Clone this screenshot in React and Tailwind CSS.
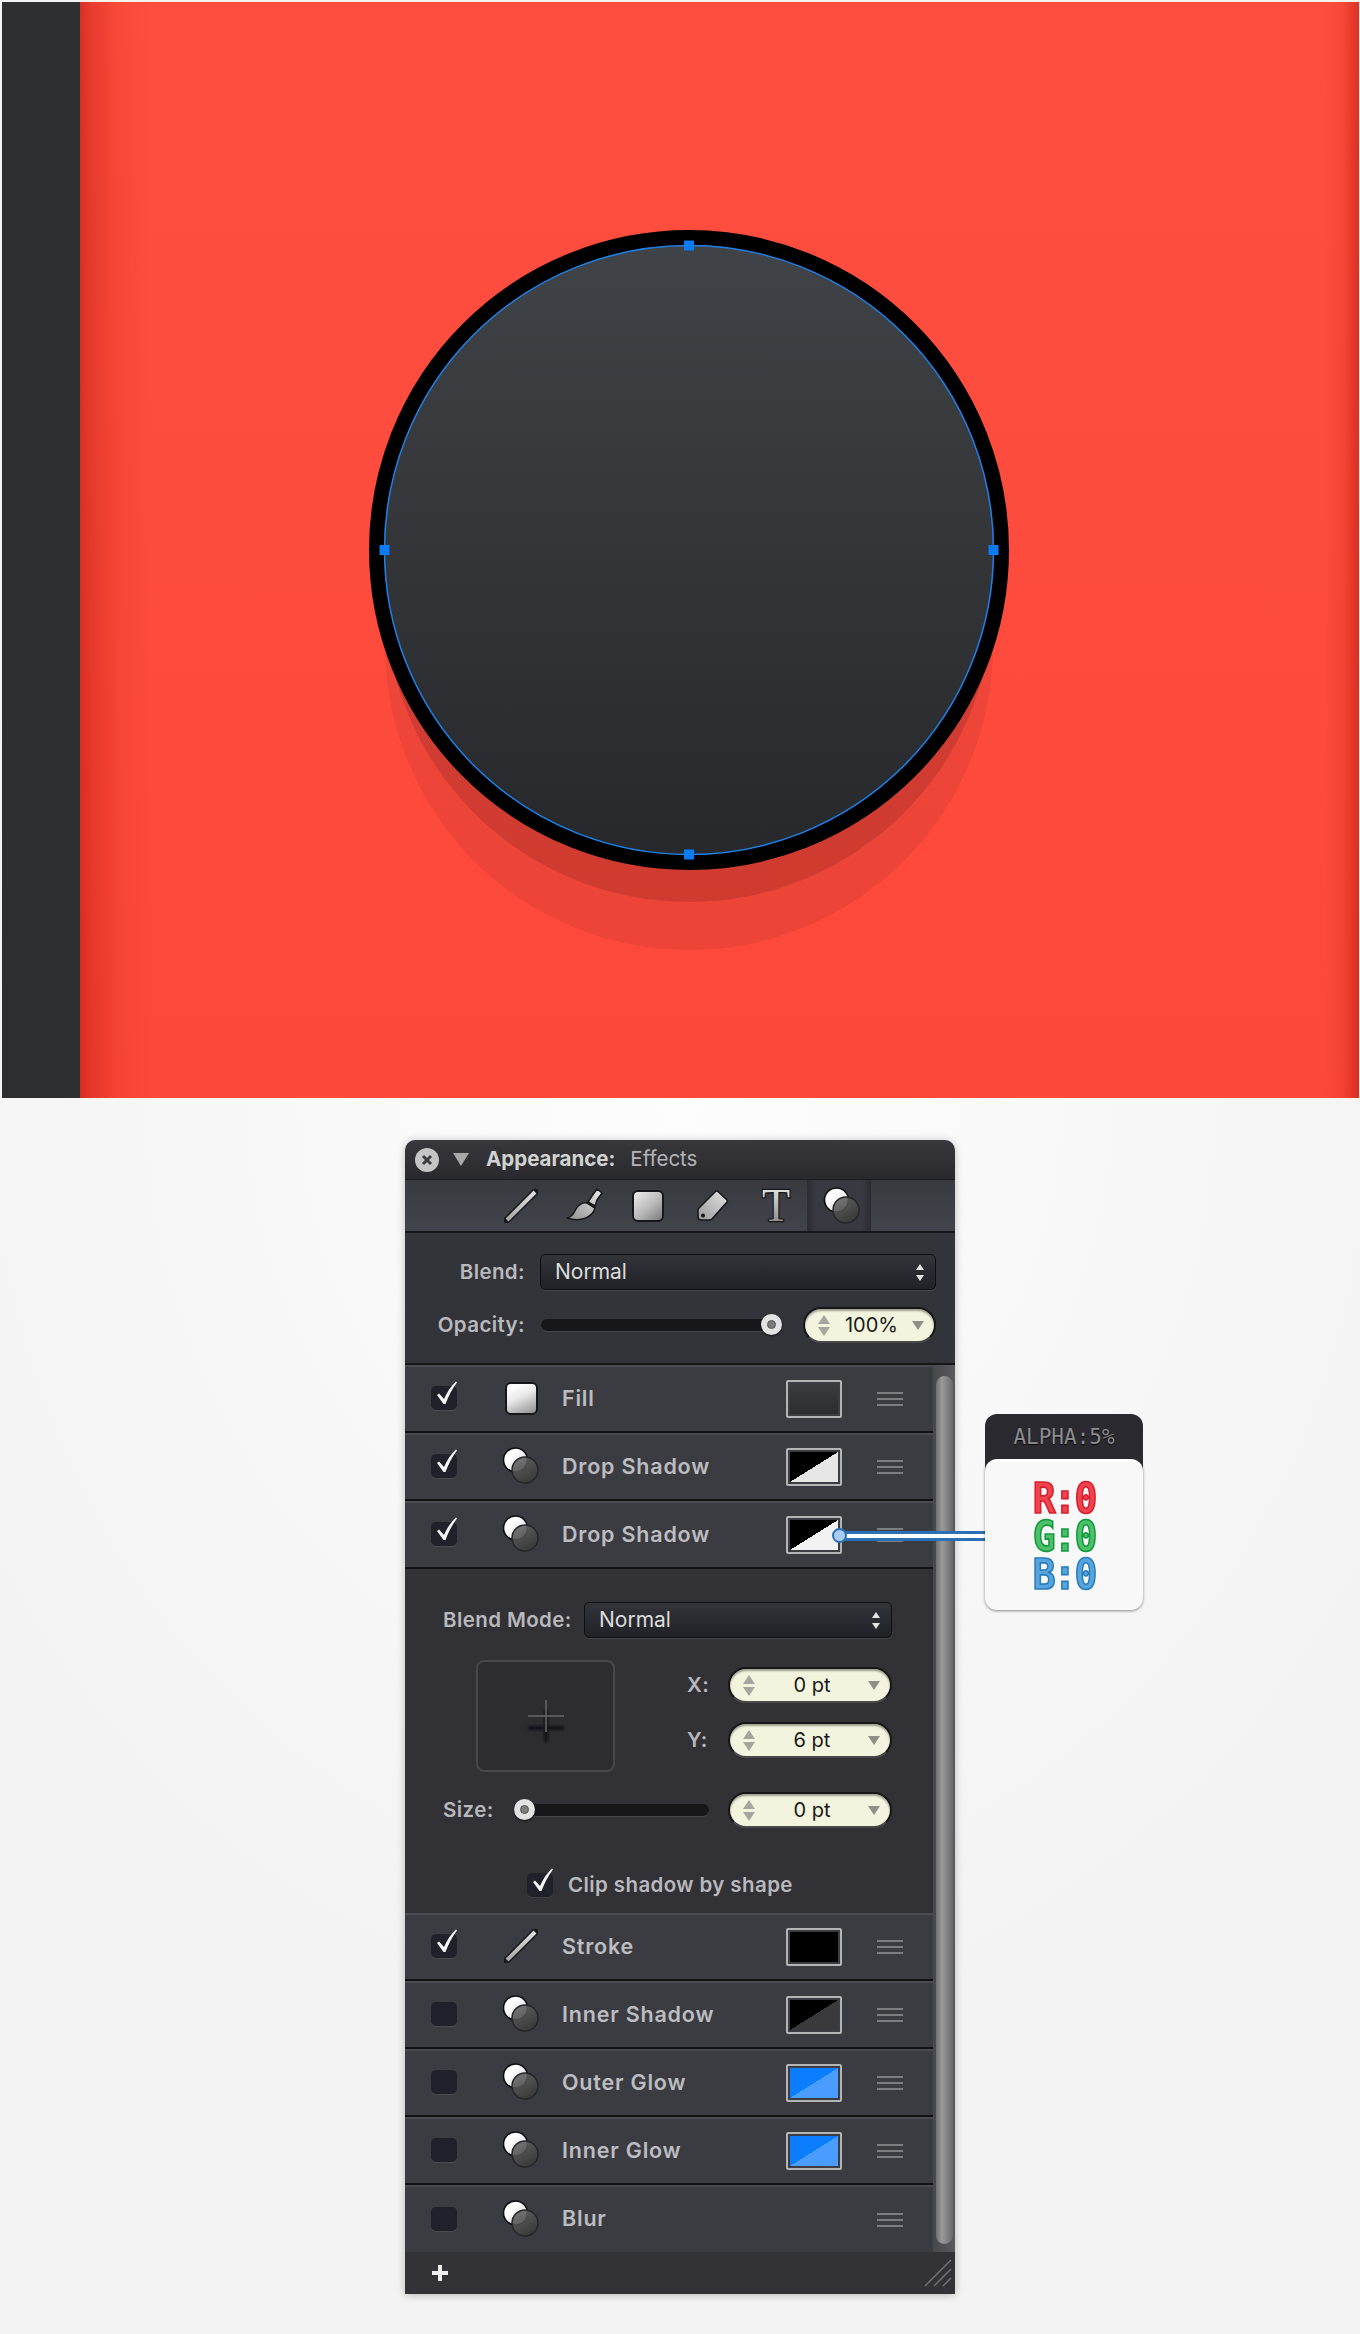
import React from "react";

const sans = "font-['Inter','Liberation_Sans',sans-serif]";
const formLabel = `text-[20.5px] font-semibold tracking-[0.4px] text-[#b9b9bd] ${sans}`;

function CheckMark() {
  return (
    <svg className="absolute left-[5px] top-[-5px]" width="22" height="24" viewBox="0 0 22 24">
      <path d="M1 14 L3 12.5 L8 18 C11 11 15 5 20 0.5 L21 1.5 C16 8 12.5 15 9.5 23 L7.5 23 Z" fill="#f4f4f4" />
    </svg>
  );
}

function Checkbox({ on }) {
  return (
    <div className="relative w-[26px] h-[24px] shrink-0 rounded-[5px] bg-[#20212a] shadow-[0_1px_0_rgba(255,255,255,0.08)]">
      {on && <CheckMark />}
    </div>
  );
}

function LineIcon({ size = 34 }) {
  return (
    <svg width={size} height={size} viewBox="0 0 34 34">
      <defs>
        <linearGradient id="lineGrad" x1="0" y1="1" x2="1" y2="0">
          <stop offset="0" stopColor="#a8a8a8" />
          <stop offset="1" stopColor="#e0e0e0" />
        </linearGradient>
      </defs>
      <path d="M3 31 L31 3" stroke="#17171a" strokeWidth="7" strokeLinecap="round" />
      <path d="M3 31 L31 3" stroke="url(#lineGrad)" strokeWidth="4" />
    </svg>
  );
}

function BrushIcon() {
  return (
    <svg width="37" height="35" viewBox="0 0 37 35">
      <defs>
        <linearGradient id="brushGrad" x1="0" y1="1" x2="1" y2="0">
          <stop offset="0" stopColor="#8e8e8e" />
          <stop offset="1" stopColor="#ececec" />
        </linearGradient>
      </defs>
      <path
        d="M31 1 L36 5 L31 12 L29 18 L22 14 L26 8 Z M21 15 L29 20 C27 28 16 35 1 30 C6 29 8 25 10 21 C12 17 17 14 21 15 Z"
        fill="url(#brushGrad)"
        stroke="#17171a"
        strokeWidth="1.5"
        strokeLinejoin="round"
      />
    </svg>
  );
}

function FillIcon({ light }) {
  return (
    <div
      className={
        light
          ? "w-[33px] h-[33px] rounded-[6px] border-2 border-[#17171a] bg-[linear-gradient(155deg,#ffffff_15%,#e8e8e8_45%,#8d8d8d_100%)]"
          : "w-[32px] h-[32px] rounded-[6px] border-2 border-[#17171a] bg-[linear-gradient(140deg,#e4e4e4_10%,#b8b8b8_55%,#7c7c7c_100%)]"
      }
    />
  );
}

function TagIcon() {
  return (
    <svg width="33" height="33" viewBox="0 0 33 33">
      <defs>
        <linearGradient id="tagGrad" x1="0" y1="1" x2="1" y2="0">
          <stop offset="0" stopColor="#9a9a9a" />
          <stop offset="1" stopColor="#e4e4e4" />
        </linearGradient>
      </defs>
      <path
        d="M20 2 Q21 1.5 22 2.5 L31 11 Q32 12 31 13 L16 30 Q15 31 13 31 L5 31 Q2 31 2 28 L2 21 Q2 20 3 19 Z"
        fill="url(#tagGrad)"
        stroke="#17171a"
        strokeWidth="1.6"
        strokeLinejoin="round"
      />
      <circle cx="7" cy="26.5" r="2" fill="#17171a" />
    </svg>
  );
}

function TIcon() {
  return (
    <svg width="40" height="46" viewBox="0 0 40 46" className="block overflow-visible">
      <defs>
        <linearGradient id="tGrad" x1="0" y1="0" x2="0" y2="1">
          <stop offset="0.2" stopColor="#dedede" />
          <stop offset="0.85" stopColor="#8c8c8c" />
        </linearGradient>
      </defs>
      <text
        x="20"
        y="38"
        textAnchor="middle"
        fontFamily="'Liberation Serif', serif"
        fontSize="46"
        fill="url(#tGrad)"
        stroke="#17171a"
        strokeWidth="2.4"
        paintOrder="stroke"
      >
        T
      </text>
    </svg>
  );
}

function EffectIcon() {
  return (
    <svg width="38" height="38" viewBox="0 0 38 38">
      <defs>
        <linearGradient id="whiteBall" x1="0" y1="0" x2="1" y2="1">
          <stop offset="0.35" stopColor="#ffffff" />
          <stop offset="1" stopColor="#c4c4c4" />
        </linearGradient>
        <linearGradient id="darkBall" x1="0" y1="0" x2="0.6" y2="1">
          <stop offset="0" stopColor="#6a6a6a" />
          <stop offset="1" stopColor="#3a3a3a" />
        </linearGradient>
      </defs>
      <circle cx="13.5" cy="13" r="12" fill="url(#whiteBall)" stroke="#0e0e10" strokeWidth="1.6" />
      <circle cx="23" cy="23" r="13" fill="url(#darkBall)" fillOpacity="0.88" stroke="#26262a" strokeWidth="1.5" />
    </svg>
  );
}

function MenuLines() {
  return (
    <div className="flex flex-col gap-[4px] w-[26px] shrink-0">
      <div className="h-[2px] bg-[#7e7e82]" />
      <div className="h-[2px] bg-[#7e7e82]" />
      <div className="h-[2px] bg-[#7e7e82]" />
    </div>
  );
}

function Swatch({ fill }) {
  return (
    <div className="w-[56px] h-[38px] shrink-0 rounded-[2px] border-2 border-[#b4b4b4] p-[2px] bg-[#3c3d42]">
      <div className={`w-full h-full ${fill}`} />
    </div>
  );
}

function UpDown() {
  return (
    <div className="flex flex-col gap-[3px] w-[14px] items-center shrink-0">
      <div className="w-0 h-0 border-x-[6px] border-x-transparent border-b-[9px] border-b-[#a5a59e]" />
      <div className="w-0 h-0 border-x-[6px] border-x-transparent border-t-[9px] border-t-[#a5a59e]" />
    </div>
  );
}

function NumberPill({ value, width }) {
  return (
    <div
      className={`${width} h-[36px] shrink-0 flex items-center pl-[12px] pr-[10px] rounded-full bg-[#f2f4dd] border-[2px] border-[#17171a] border-b-[#4a4a4a] shadow-[inset_0_2px_2px_rgba(0,0,0,0.35)]`}
    >
      <UpDown />
      <div className={`flex-1 text-center text-[20px] text-[#1a1a1a] ${sans}`}>{value}</div>
      <div className="w-0 h-0 border-x-[6px] border-x-transparent border-t-[9px] border-t-[#8f8f88]" />
    </div>
  );
}

function SelectBox({ width }) {
  return (
    <div
      className={`${width} h-[36px] shrink-0 flex items-center justify-between pl-[14px] pr-[11px] rounded-[5px] border border-[#0f0f12] bg-[linear-gradient(180deg,#33343a,#212227)] shadow-[0_1px_0_rgba(255,255,255,0.1)]`}
    >
      <span className={`text-[21px] text-[#dcdcdc] ${sans}`}>Normal</span>
      <div className="flex flex-col gap-[5px]">
        <div className="w-0 h-0 border-x-[4px] border-x-transparent border-b-[6px] border-b-[#e4e4e4]" />
        <div className="w-0 h-0 border-x-[4px] border-x-transparent border-t-[6px] border-t-[#e4e4e4]" />
      </div>
    </div>
  );
}

function Slider({ width, knobLeft }) {
  return (
    <div className={`relative ${width} h-[12px] shrink-0 rounded-full bg-[#17171a] shadow-[0_1px_0_rgba(255,255,255,0.1)]`}>
      <div
        className="absolute top-[-5px] w-[21px] h-[21px] rounded-full bg-[#e2e2e2] shadow-[0_1px_2px_rgba(0,0,0,0.7)] flex items-center justify-center"
        style={{ left: knobLeft }}
      >
        <div className="w-[9px] h-[9px] rounded-full bg-[#7d7d7d] border border-[#555]" />
      </div>
    </div>
  );
}

function Row({ checked, icon, label, swatch, last }) {
  return (
    <div
      className={`${last ? "h-[67px] border-b-0" : "h-[68px] border-b-2"} flex items-center pl-[26px] pr-[30px] border-t-2 border-t-[#4b4c51] border-b-[#121215] bg-[#3b3c41]`}
    >
      <div className="-mt-[2px]"><Checkbox on={checked} /></div>
      <div className="w-[38px] ml-[45px] -mt-[2px] flex items-center justify-center shrink-0">{icon}</div>
      <div className={`ml-[22px] pb-[2px] text-[21.5px] font-semibold tracking-[0.8px] text-[#bcbcc1] ${sans}`}>{label}</div>
      <div className="ml-auto flex items-center">
        {swatch && <Swatch fill={swatch} />}
        <div className={swatch ? "ml-[35px]" : "ml-[91px]"}>
          <MenuLines />
        </div>
      </div>
    </div>
  );
}

function Art() {
  return (
    <div className="mt-[2px] ml-[2px] mr-[1px] h-[1096px] flex">
      <div className="w-[78px] shrink-0 bg-[#2d2f31]" />
      <div className="flex-1 bg-[linear-gradient(180deg,rgba(255,255,255,0.01),rgba(190,0,0,0.05)),linear-gradient(90deg,#d92e21_0,#e83a2d_12px,#f94737_40px,#ff4c3e_72px,#ff4c3e_calc(100%-34px),#f64536_calc(100%-16px),#dc2f20_100%)]">
        <svg width="1279" height="1096" viewBox="0 0 1279 1096" className="block">
          <defs>
            <linearGradient id="discGrad" x1="0" y1="0" x2="0" y2="1">
              <stop offset="0" stopColor="#404347" />
              <stop offset="1" stopColor="#26282b" />
            </linearGradient>
          </defs>
          <circle cx="609" cy="644" r="304" fill="#000" fillOpacity="0.06" />
          <circle cx="609" cy="596" r="304" fill="#000" fillOpacity="0.12" />
          <circle cx="609" cy="548" r="312.5" fill="url(#discGrad)" stroke="#000" strokeWidth="15" />
          <circle cx="609" cy="548" r="304.5" fill="none" stroke="#1b80ea" strokeWidth="1.5" />
          <rect x="604" y="238.5" width="10" height="10" fill="#0a7bf5" />
          <rect x="604" y="847.5" width="10" height="10" fill="#0a7bf5" />
          <rect x="299.5" y="543" width="10" height="10" fill="#0a7bf5" />
          <rect x="908.5" y="543" width="10" height="10" fill="#0a7bf5" />
        </svg>
      </div>
    </div>
  );
}

function ColorTag() {
  const lines = [
    ["R:0", "text-[#ef4450] [-webkit-text-stroke:1.5px_#d81f2e]"],
    ["G:0", "text-[#4cc06a] [-webkit-text-stroke:1.5px_#15993f]"],
    ["B:0", "text-[#57a5dd] [-webkit-text-stroke:1.5px_#2a7dbb]"],
  ];
  return (
    <div className="absolute left-[580px] top-[274px] w-[158px] h-[196px]">
      <div className="h-[60px] rounded-t-[12px] bg-[#2a2a30] pt-[8px] text-center">
        <span className="font-['DejaVu_Sans_Mono',monospace] text-[21px] text-[#8e8e92] [text-shadow:0_1px_1px_#000]">ALPHA:5%</span>
      </div>
      <div className="absolute left-0 right-0 top-[45px] h-[151px] rounded-[12px] bg-[#f8f8f8] border-t-2 border-white shadow-[0_1px_3px_rgba(0,0,0,0.45)] flex flex-col items-center justify-center">
        {lines.map(([t, c]) => (
          <div key={t} className={`font-['DejaVu_Sans_Mono',monospace] font-bold text-[38px] leading-[38px] tracking-[-2px] scale-y-[1.12] ${c}`}>
            {t}
          </div>
        ))}
      </div>
    </div>
  );
}

export default function App() {
  return (
    <div className="w-[1360px] h-[2334px] overflow-hidden bg-[radial-gradient(ellipse_60%_40%_at_50%_1100px,#fdfdfd,#f3f3f3)]">
      <Art />

      <div className="relative ml-[405px] mt-[42px] w-[550px] h-[1154px] shadow-[0_1px_8px_rgba(0,0,0,0.25)] rounded-t-[10px]">
        {/* title bar */}
        <div className="h-[40px] rounded-t-[10px] flex items-center pl-[10px] bg-[linear-gradient(180deg,#38383c,#29292e)] border-b border-[#1b1b1e]">
          <div className="w-[24px] h-[24px] rounded-full bg-[#c4c4c4] flex items-center justify-center">
            <svg width="12" height="12" viewBox="0 0 12 12">
              <path d="M2 2 L10 10 M10 2 L2 10" stroke="#3b3b3f" strokeWidth="3" />
            </svg>
          </div>
          <div className="ml-[14px] w-0 h-0 border-x-[8px] border-x-transparent border-t-[13px] border-t-[#a8a8a8]" />
          <span className={`ml-[17px] text-[20.5px] font-bold text-[#d2d2d2] ${sans}`}>Appearance:</span>
          <span className={`ml-[15px] text-[20.5px] text-[#b4b4b6] ${sans}`}>Effects</span>
        </div>

        {/* toolbar */}
        <div className="h-[53px] flex items-center pl-[84px] bg-[linear-gradient(180deg,#383a40,#42444b)] border-b-2 border-[#17171a]">
          <div className="w-[64px] flex justify-center"><LineIcon /></div>
          <div className="w-[62px] flex justify-center"><BrushIcon /></div>
          <div className="w-[65px] flex justify-center"><FillIcon /></div>
          <div className="w-[65px] flex justify-center"><TagIcon /></div>
          <div className="w-[62px] flex justify-center"><TIcon /></div>
          <div className="w-[64px] h-full flex justify-center items-center pl-[6px] bg-[linear-gradient(90deg,#2c2d33,#393a41_14%,#393a41_86%,#2c2d33)]"><EffectIcon /></div>
        </div>

        {/* blend + opacity */}
        <div className="h-[132px] bg-[#333439] border-b-2 border-[#17171a]">
          <div className="flex items-center pt-[21px]">
            <div className={`w-[120px] text-right ${formLabel}`}>Blend:</div>
            <div className="ml-[15px]"><SelectBox width="w-[396px]" /></div>
          </div>
          <div className="flex items-center mt-[17px]">
            <div className={`w-[120px] text-right ${formLabel}`}>Opacity:</div>
            <div className="ml-[16px]"><Slider width="w-[241px]" knobLeft={220} /></div>
            <div className="ml-[21px]"><NumberPill value="100%" width="w-[133px]" /></div>
          </div>
        </div>

        <div className="flex">
          {/* list */}
          <div className="w-[528px] shrink-0">
            <Row checked icon={<FillIcon light />} label="Fill" swatch="bg-[linear-gradient(180deg,#3a3c40,#2b2d31)]" />
            <Row checked icon={<EffectIcon />} label="Drop Shadow" swatch="bg-[linear-gradient(to_bottom_right,#000_50%,#e6e6e6_50%)]" />
            <Row checked icon={<EffectIcon />} label="Drop Shadow" swatch="bg-[linear-gradient(to_bottom_right,#000_50%,#f2f2f2_50%)]" />

            {/* expanded drop shadow settings */}
            <div className="h-[344px] bg-[#313136] pt-[33px] pl-[38px]">
              <div className="flex items-center">
                <div className={`w-[128px] whitespace-nowrap ${formLabel}`}>Blend Mode:</div>
                <div className="ml-[13px]"><SelectBox width="w-[308px]" /></div>
              </div>

              <div className="flex mt-[22px]">
                <div className="ml-[33px] w-[139px] h-[112px] shrink-0 rounded-[8px] border-2 border-[#47474c] bg-[#2d2d31] flex items-center justify-center">
                  <svg width="44" height="60" viewBox="0 0 44 60">
                    <defs>
                      <filter id="crossBlur"><feGaussianBlur stdDeviation="0.9" /></filter>
                    </defs>
                    <path d="M4 42 H40 M22 24 V56" stroke="#161618" strokeWidth="3.5" filter="url(#crossBlur)" />
                    <path d="M4 30 H40 M22 14 V46" stroke="#6a6a6e" strokeWidth="1.5" />
                  </svg>
                </div>
                <div className="ml-[72px] pt-[7px] flex flex-col gap-[19px]">
                  <div className="flex items-center">
                    <div className={`w-[41px] ${formLabel}`}>X:</div>
                    <NumberPill value="0 pt" width="w-[164px]" />
                  </div>
                  <div className="flex items-center">
                    <div className={`w-[41px] ${formLabel}`}>Y:</div>
                    <NumberPill value="6 pt" width="w-[164px]" />
                  </div>
                </div>
              </div>

              <div className="flex items-center mt-[20px]">
                <div className={`w-[71px] ${formLabel}`}>Size:</div>
                <Slider width="w-[195px]" knobLeft={0} />
                <div className="ml-[19px]"><NumberPill value="0 pt" width="w-[164px]" /></div>
              </div>

              <div className="flex items-center mt-[42px] ml-[84px]">
                <Checkbox on />
                <div className={`ml-[15px] whitespace-nowrap ${formLabel}`}>Clip shadow by shape</div>
              </div>
            </div>

            <Row checked icon={<LineIcon />} label="Stroke" swatch="bg-black" />
            <Row icon={<EffectIcon />} label="Inner Shadow" swatch="bg-[linear-gradient(to_bottom_right,#000_50%,#3a3a3c_50%)]" />
            <Row icon={<EffectIcon />} label="Outer Glow" swatch="bg-[linear-gradient(to_bottom_right,#0a7eff_50%,#4a9dff_50%)]" />
            <Row icon={<EffectIcon />} label="Inner Glow" swatch="bg-[linear-gradient(to_bottom_right,#0a7eff_50%,#4a9dff_50%)]" />
            <Row icon={<EffectIcon />} label="Blur" last />
          </div>

          {/* scroll bar */}
          <div className="w-[22px] bg-[linear-gradient(90deg,#48484c,#5a5a5e)] pl-[3px] pr-[2px] pt-[11px]">
            <div className="h-[868px] rounded-full bg-[linear-gradient(90deg,#6f6f71,#9a9a9c_35%,#68686a)]" />
          </div>
        </div>

        {/* footer */}
        <div className="h-[42px] flex items-center justify-between pl-[27px] pr-[3px] bg-[#323237]">
          <svg width="16" height="16" viewBox="0 0 16 16">
            <path d="M8 0 V16 M0 8 H16" stroke="#efefef" strokeWidth="4" />
          </svg>
          <svg width="28" height="28" viewBox="0 0 28 28">
            <path d="M1 27 L27 1 M10 27 L27 10 M19 27 L27 19" stroke="#737377" strokeWidth="1.5" />
          </svg>
        </div>

        {/* connector from swatch to color tag */}
        <div className="absolute left-[434px] top-[391px] w-[146px] h-[10px] bg-white border-y-[3px] border-[#2a70b5]" />
        <div className="absolute left-[427px] top-[388px] w-[15px] h-[15px] rounded-full bg-[#a9cdf6] border-2 border-[#2a70b5]" />

        <ColorTag />
      </div>
    </div>
  );
}
